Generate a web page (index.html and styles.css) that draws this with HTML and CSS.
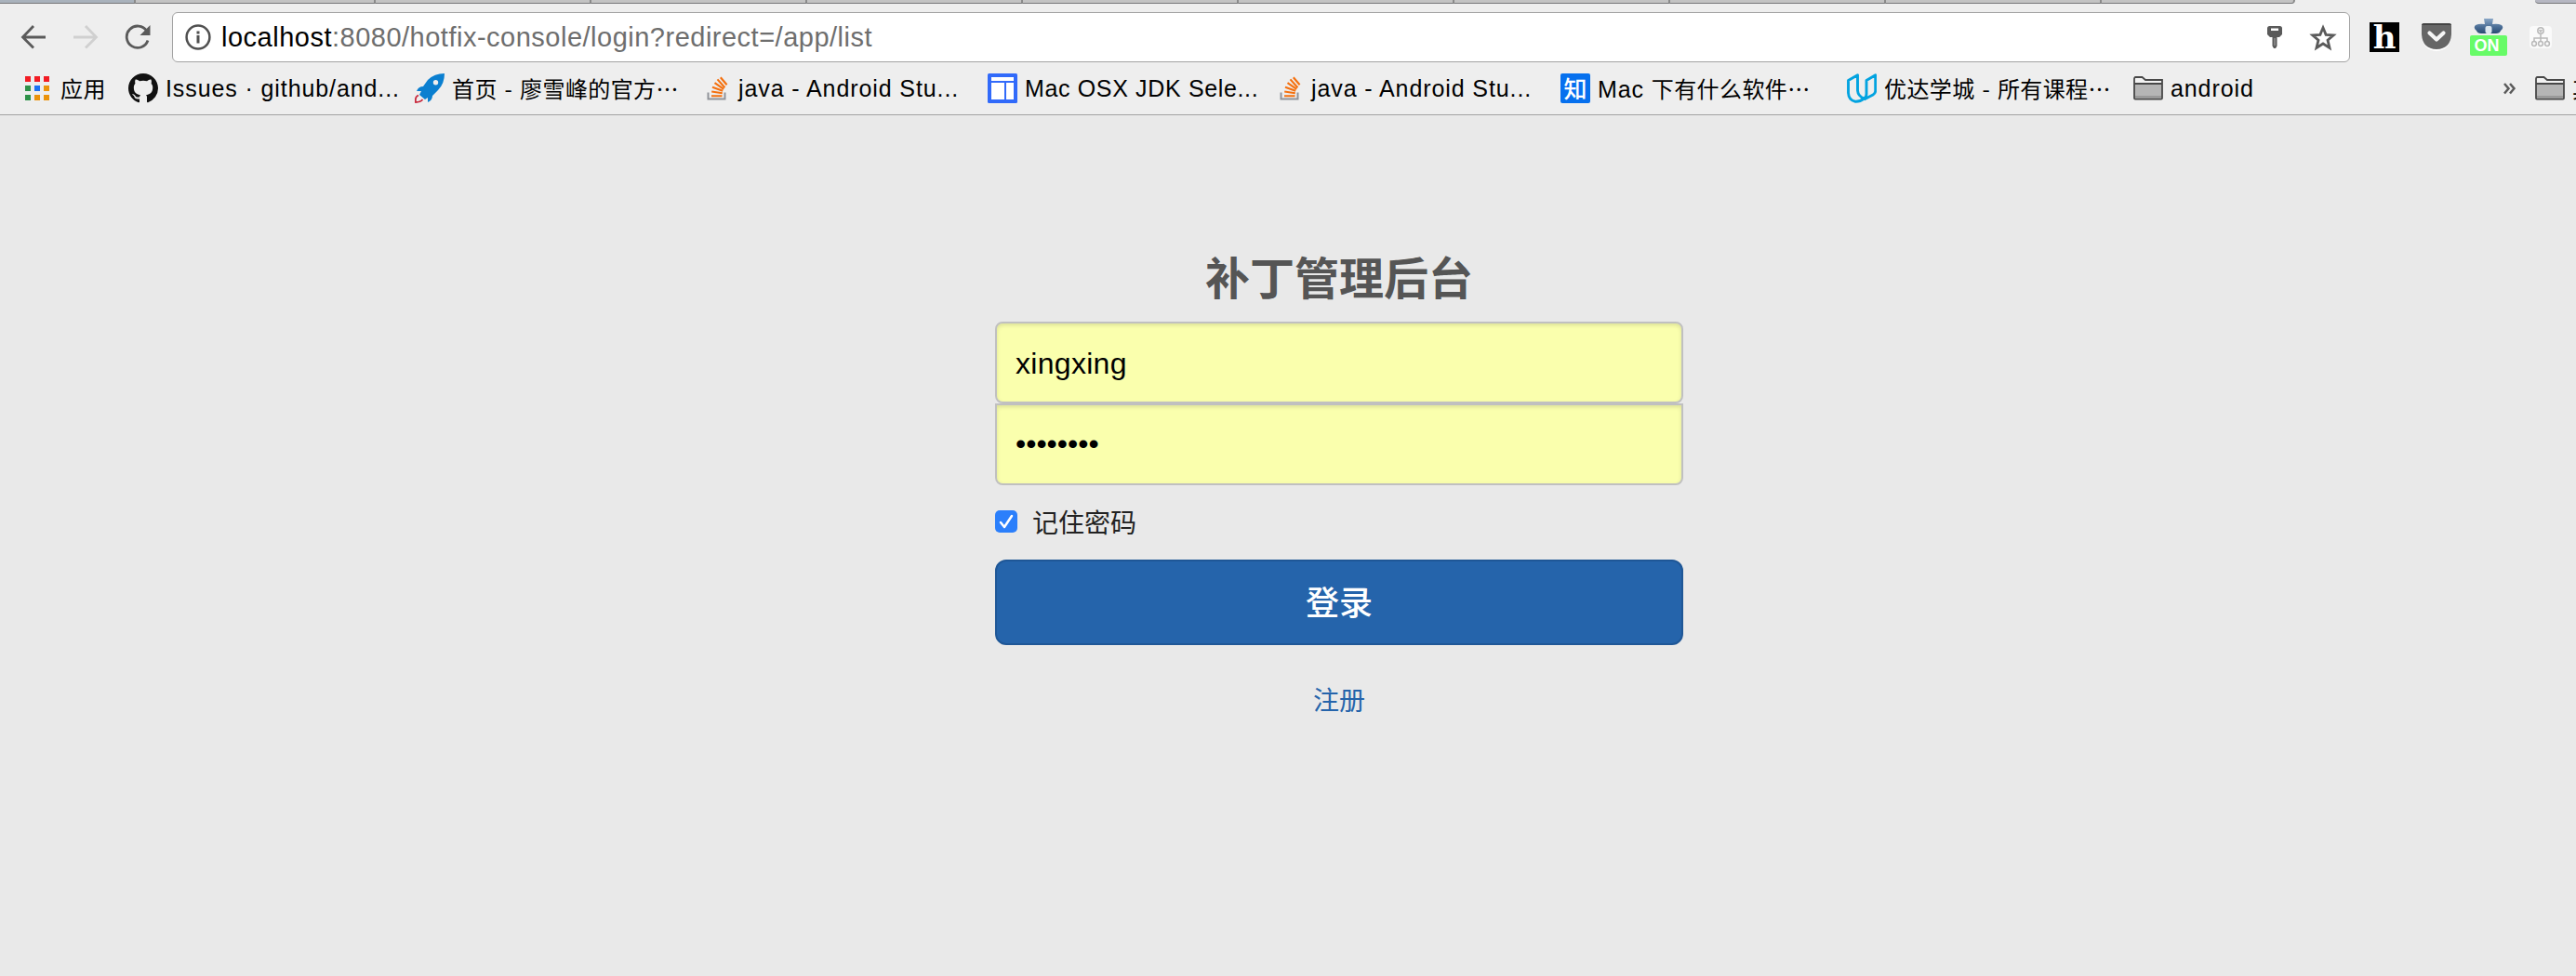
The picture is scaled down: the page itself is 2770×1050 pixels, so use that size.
FILE: index.html
```html
<!DOCTYPE html>
<html lang="zh-CN">
<head>
<meta charset="utf-8">
<title>补丁管理后台</title>
<link rel="stylesheet" href="styles.css">
</head>
<body>
<svg class="defs" width="0" height="0" aria-hidden="true">
  <symbol id="so" viewBox="0 0 26 26">
    <path d="M1.500 17.500V24.500H19.500V17.500" fill="none" stroke="#909399" stroke-width="2"/>
    <path d="M5 21.200H16.500M5.200 16.500 16.800 18.200M6 11.800 17.200 15.800M8.500 7.200 18.200 13.800M11.500 3.400 19.400 12.200M14.800 1.200 21.600 9.200" fill="none" stroke="#f4700f" stroke-width="2.100"/>
  </symbol>
  <symbol id="folder" viewBox="0 0 32 26">
    <path d="M1 23.500V3.200Q1 1 3 1H10L13 4H31V23.500Q31 24.500 30 24.500H2Q1 24.500 1 23.500Z" fill="#f2f2f2"/>
    <path d="M1 8H31V24H1Z" fill="#b5b5b5"/>
    <path d="M2 22H30" stroke="#999" stroke-width="2"/>
    <path d="M1 23.500V3Q1 1 2.500 1H9.500L13 4H31V23.500Q31 24.700 30 24.700H2Q1 24.700 1 23.500ZM1 8H31" fill="none" stroke="#484848" stroke-width="1.800"/>
  </symbol>
</svg>

<div class="tabs">
  <i class="tab tab-first"></i><i class="tab tab-wide"></i><i class="tab"></i><i class="tab"></i><i class="tab"></i><i class="tab"></i><i class="tab"></i><i class="tab"></i><i class="tab"></i><i class="tab"></i><i class="tab tab-last"></i>
  <i class="tab tab-user"></i>
</div>

<header class="chrome">
  <div class="toolbar">
    <nav class="nav">
      <svg width="28" height="28" viewBox="0 0 28 28"><path d="M27 14H3M14 2 2.500 14 14 25.500" fill="none" stroke="#5a5a5a" stroke-width="2.800"/></svg>
      <svg width="28" height="28" viewBox="0 0 28 28"><path d="M1 14H25M14 2 25.500 14 14 25.500" fill="none" stroke="#d0d0d0" stroke-width="2.800"/></svg>
      <svg width="28" height="28" viewBox="0 0 28 28"><path d="M23.800 7.400A11.700 11.700 0 1 0 25 17.500" fill="none" stroke="#5a5a5a" stroke-width="2.800"/><path d="M27.500 1V12H16.500Z" fill="#5a5a5a"/></svg>
    </nav>
    <div class="omnibox">
      <svg width="28" height="28" viewBox="0 0 28 28"><circle cx="14" cy="14" r="12.400" fill="none" stroke="#505050" stroke-width="2.500"/><path d="M12.500 7.600H15.500V10.400H12.500ZM12.500 12H15.500V20.400H12.500Z" fill="#505050"/></svg>
      <span class="url"><b>localhost</b>:8080/hotfix-console/login?redirect=/app/list</span>
      <svg class="key" width="16" height="24" viewBox="0 0 16 24"><path fill-rule="evenodd" d="M2.500 0H13.500Q16 0 16 2.500V9L13 12H10.500V21.500L9 24H7L5.500 21.500V12H3L0 9V2.500Q0 0 2.500 0ZM4 2.500V5H12V2.500Z" fill="#5a5a5a"/><path d="M8 13V21" stroke="#aaa" stroke-width="1"/></svg>
      <svg width="30" height="29" viewBox="0 0 30 29"><path d="M15 3.800 18.100 11.300 26.200 11.900 20 17.200 22 25.400 15 21 8 25.400 10 17.200 3.800 11.900 11.900 11.300Z" fill="none" stroke="#5a5a5a" stroke-width="2.800"/></svg>
    </div>
    <div class="extensions">
      <span class="ext-h">h</span>
      <svg width="32" height="30" viewBox="0 0 32 30"><path d="M0 4Q0 1 3 1H29Q32 1 32 4V13Q31 29 16 30Q1 29 0 13Z" fill="#fff"/><path d="M0 3Q0 0 3 0H29Q32 0 32 3V12Q31 27.500 16 28Q1 27.500 0 12Z" fill="#666"/><path d="M1 2Q1 1 3 1H29Q31 1 31 2" fill="none" stroke="#444" stroke-width="2"/><path d="M8.500 10.500 16 17.500 23.500 10.500" fill="none" stroke="#f5f5f5" stroke-width="4.200" stroke-linecap="round" stroke-linejoin="round"/></svg>
      <span class="ext-on">
        <svg width="32" height="18" viewBox="0 0 32 18"><defs><linearGradient id="bl" x1="0" y1="0" x2="0" y2="1"><stop offset="0" stop-color="#88a6c6"/><stop offset=".6" stop-color="#486b93"/><stop offset="1" stop-color="#294b72"/></linearGradient></defs><path d="M11 0H21L20 6Q26 5 30 7Q33 10 29 13Q28 16 24 16H8Q4 16 3 13Q-1 10 2 7Q6 5 12 6Z" fill="url(#bl)"/><rect x="12.500" y="8" width="7" height="8" rx="2" fill="#dce7ef"/></svg>
        <em>ON</em>
      </span>
      <svg width="24" height="24" viewBox="0 0 24 24"><rect width="24" height="24" rx="4" fill="#fafafa"/><g fill="none" stroke="#b9b9b9" stroke-width="1.500"><circle cx="12" cy="5" r="3.200"/><path d="M12 8.500V17M5 17V13H19V17M10.500 4 12 6 13.500 4"/><circle cx="5" cy="19" r="2.400"/><circle cx="12" cy="19" r="2.400"/><circle cx="19" cy="19" r="2.400"/></g></svg>
    </div>
  </div>

  <div class="bookmarks">
    <a class="bm bm-apps"><svg width="26" height="26" viewBox="0 0 26 26"><path d="M0 0H6V6H0ZM10 0H16V6H10ZM20 0H26V6H20Z" fill="#f21c24"/><path d="M0 10H6V16H0ZM0 20H6V26H0Z" fill="#2d9148"/><path d="M10 10H16V16H10Z" fill="#1d72f3"/><path d="M20 10H26V16H20ZM10 20H16V26H10ZM20 20H26V26H20Z" fill="#eb930b"/></svg><span class="zh">应用</span></a>
    <a class="bm bm-issues"><svg width="32" height="32" viewBox="0 0 16 16"><path fill="#111" d="M8 0C3.580 0 0 3.580 0 8c0 3.540 2.290 6.530 5.470 7.590.4.070.550-.170.550-.380 0-.190-.010-.820-.010-1.490-2.010.370-2.530-.490-2.690-.940-.090-.230-.480-.940-.820-1.130-.280-.150-.680-.520-.010-.530.630-.010 1.080.580 1.230.820.720 1.210 1.870.870 2.330.660.070-.520.280-.870.510-1.070-1.780-.2-3.640-.890-3.640-3.950 0-.870.310-1.590.820-2.150-.080-.2-.360-1.020.080-2.120 0 0 .670-.210 2.200.820a7.600 7.600 0 0 1 4 0c1.530-1.040 2.200-.820 2.200-.820.440 1.100.160 1.920.080 2.120.510.560.820 1.270.820 2.150 0 3.070-1.870 3.750-3.650 3.950.290.250.540.730.540 1.480 0 1.070-.010 1.930-.010 2.200 0 .210.150.460.550.380A8 8 0 0 0 16 8c0-4.420-3.580-8-8-8Z"/></svg><span>Issues · github/and...</span></a>
    <a class="bm bm-liao"><svg width="32" height="32" viewBox="0 0 32 32"><path fill-rule="evenodd" d="M32 0Q21 0 14 7L9 14Q4 14 2 19L7 19L5 23L11 28L14 26L14 31Q19 29 19 24L25 18Q32 11 32 0ZM22.500 7A2.700 2.700 0 1 0 22.500 12.400A2.700 2.700 0 1 0 22.500 7Z" fill="#0a7fd0"/><path d="M4 23.500Q0 25 1 31Q6 31 8.500 28" fill="none" stroke="#c8283c" stroke-width="1.800"/></svg><span class="zh">首页 - 廖雪峰的官方…</span></a>
    <a class="bm bm-so1"><svg width="26" height="26"><use href="#so"/></svg><span>java - Android Stu...</span></a>
    <a class="bm bm-jdk"><svg width="32" height="32" viewBox="0 0 32 32"><rect width="32" height="32" rx="1.500" fill="#316afa"/><path d="M4 4H28V8H4ZM4 10H18V28H4ZM20 10H28V28H20Z" fill="#fff"/></svg><span>Mac OSX JDK Sele...</span></a>
    <a class="bm bm-so2"><svg width="26" height="26"><use href="#so"/></svg><span>java - Android Stu...</span></a>
    <a class="bm bm-zhihu"><i class="zhihu">知</i><span>Mac <span class="zh">下有什么软件…</span></span></a>
    <a class="bm bm-udacity"><svg width="32" height="32" viewBox="0 0 32 32"><path d="M1.500 7.500 11.500 1.800V18.500Q12 24.500 18.500 27Q14 30.500 9 30.200Q2 29 1.500 21ZM18.500 27Q21 26 21 22V7.500L30.700 1.800V19Q30.500 21.500 28 23L18.500 28" fill="none" stroke="#02a3e0" stroke-width="2.900" stroke-linejoin="round"/></svg><span class="zh">优达学城 - 所有课程…</span></a>
    <a class="bm bm-android"><svg width="32" height="26"><use href="#folder"/></svg><span>android</span></a>
    <svg class="more" width="13" height="13" viewBox="0 0 13 13"><path d="M1 1 5.500 6.200 1 11.500M7 1 11.500 6.200 7 11.500" fill="none" stroke="#5a5a5a" stroke-width="2.500"/></svg>
    <a class="bm bm-other"><svg width="32" height="26"><use href="#folder"/></svg><span class="zh">其</span></a>
  </div>
</header>

<main class="page">
  <form class="login">
    <h1>补丁管理后台</h1>
    <div class="field">xingxing</div>
    <div class="field field-password">••••••••</div>
    <label class="remember"><svg width="24" height="24" viewBox="0 0 24 24"><rect width="24" height="24" rx="5" fill="#2b7ffb"/><path d="M6 13 10 18 18 6" fill="none" stroke="#fff" stroke-width="2.500" stroke-linecap="round" stroke-linejoin="round"/></svg><span>记住密码</span></label>
    <button type="button" class="submit">登录</button>
    <a class="register">注册</a>
  </form>
</main>
</body>
</html>
```
FILE: styles.css
```css
* { box-sizing: border-box; }

body {
  margin: 0;
  width: 2770px;
  height: 1050px;
  overflow: hidden;
  background: #e9e9e9;
  color: #000;
  font-family: "Liberation Sans", "Noto Sans CJK SC", sans-serif;
}

svg { display: block; flex: none; }
.defs { position: absolute; }

/* Bottom edge of the tab strip */
.tabs { display: flex; height: 4px; background: #eee; }
.tab {
  flex: none;
  width: 232px;
  height: 4px;
  background: #c3c3c3;
  border-bottom: 1px solid #77787a;
  border-right: 2px solid #8b8b8b;
}
.tab-first { width: 146px; background: #a9b2bc; }
.tab-wide { width: 258px; }
.tab-last { width: 208px; border-bottom-right-radius: 4px; }
.tab-user { width: 44px; margin-left: auto; background: #b6b7c2; border-right: 0; border-bottom-left-radius: 4px; }

.chrome {
  height: 120px;
  background: #eee;
  border-bottom: 1px solid #a2a2a2;
}

.toolbar { display: flex; align-items: center; height: 72px; }
.nav { display: flex; gap: 28px; width: 185px; padding-left: 22px; }

.omnibox {
  display: flex;
  align-items: center;
  width: 2342px;
  height: 54px;
  padding: 0 13px;
  background: #fff;
  border: 1px solid #a3a3a3;
  border-radius: 6px;
}
.url {
  flex: 1;
  margin-left: 11px;
  color: #6e6e6e;
  font-size: 29px;
  line-height: 50px;
  letter-spacing: 0.5px;
  white-space: nowrap;
}
.url b { color: #000; font-weight: 400; }
.key { margin-right: 29px; }

.extensions { display: flex; align-items: center; }
.ext-h {
  width: 32px;
  height: 32px;
  margin: 0 24px 0 21px;
  background: #000;
  color: #fff;
  font: bold 34px/32px "DejaVu Serif", serif;
  text-align: center;
}
.ext-on { width: 40px; height: 40px; margin: 0 24px 0 20px; }
.ext-on svg { margin-left: 4px; }
.ext-on em {
  display: block;
  height: 22px;
  padding-right: 4px;
  background: #67fb67;
  border-radius: 2px;
  color: #fff;
  font: bold 18px/23px "Liberation Sans", sans-serif;
  text-align: center;
}

.bookmarks { display: flex; align-items: center; height: 38px; padding-left: 27px; }
.bm {
  display: flex;
  flex: none;
  align-items: center;
  gap: 8px;
  font-size: 25px;
  letter-spacing: 0.9px;
  line-height: 38px;
  white-space: nowrap;
}
.zh {
  font-family: "Noto Sans CJK SC", sans-serif;
  font-size: 24px;
  letter-spacing: 0.4px;
  word-spacing: 2px;
}
.bm-apps { gap: 12px; width: 111px; }
.bm-issues { width: 308px; }
.bm-liao { width: 314px; }
.bm-so1 { width: 302px; }
.bm-jdk { width: 314px; letter-spacing: 0.65px; }
.bm-so2 { width: 302px; }
.bm-zhihu { width: 308px; }
.bm-udacity { width: 308px; }
.bm-android { width: 398px; }
.bm-other { margin-left: 21px; }
.zhihu {
  width: 32px;
  height: 32px;
  border-radius: 2px;
  background: #0670ee;
  color: #fff;
  font: 500 25px/31px "Noto Sans CJK SC", sans-serif;
  text-align: center;
  letter-spacing: 0;
}

.page { display: flex; justify-content: center; padding: 140px 0 0 110px; }
.login { display: flex; flex-direction: column; width: 740px; }
h1 {
  margin: 0 0 18px;
  color: #555;
  font: 700 48px/64px "Noto Sans CJK SC", sans-serif;
  text-align: center;
}
.field {
  height: 88px;
  padding: 0 20px;
  background: #faffad;
  border: 2px solid #c0c0c0;
  border-radius: 8px;
  box-shadow: inset 0 2px 4px rgba(0, 0, 0, 0.12);
  font-size: 32px;
  line-height: 86px;
  letter-spacing: 0.3px;
}
.field-password { border-radius: 0 0 8px 8px; line-height: 83px; letter-spacing: 0; }
.remember {
  display: flex;
  align-items: center;
  gap: 16px;
  height: 40px;
  margin: 19px 0 21px;
  color: #222;
  font: 28px/40px "Noto Sans CJK SC", sans-serif;
}
.submit {
  height: 92px;
  padding: 0 0 4px;
  border: 2px solid #1f5797;
  border-radius: 12px;
  background: #2564ab;
  color: #fff;
  font: 500 36px/84px "Noto Sans CJK SC", sans-serif;
}
.register {
  align-self: center;
  margin-top: 38px;
  color: #2564ab;
  font: 28px/40px "Noto Sans CJK SC", sans-serif;
}
```
